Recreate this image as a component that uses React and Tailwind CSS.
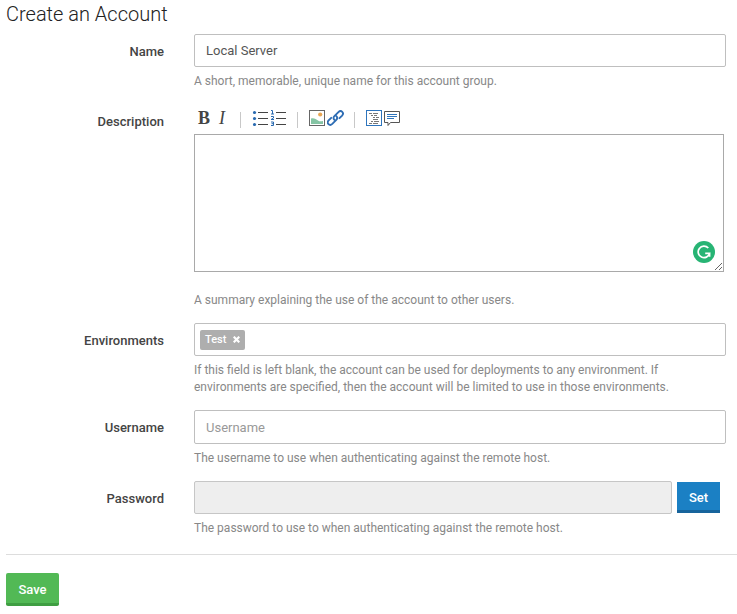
import React from "react";

const fieldClass =
  "block w-full rounded-[2px] border border-[#bfbfbf] bg-white px-[11px] text-[13px] text-[#555] outline-none placeholder:text-[#999]";

function FormRow({ id, label, help, children }) {
  return (
    <div className="flex gap-[30px]">
      <label
        htmlFor={id}
        className="w-[158px] shrink-0 pt-[9px] text-right text-[13px] leading-[18px] font-medium text-[#444]"
      >
        {label}
      </label>
      <div className="min-w-0 flex-1">
        {children}
        <p className="mt-[6px] text-[12px] leading-[17px] text-[#888]">{help}</p>
      </div>
    </div>
  );
}

function ToolButton({ title, children }) {
  return (
    <button type="button" aria-label={title} title={title} className="flex h-[18px] w-[18px] items-center justify-center">
      {children}
    </button>
  );
}

function Icon({ children }) {
  return (
    <svg width="18" height="18" viewBox="0 0 18 18" fill="none" aria-hidden="true">
      {children}
    </svg>
  );
}

function Separator() {
  return <span className="mt-1 mr-[11px] ml-[9px] h-4 w-px bg-[#c8c8c8]" />;
}

function Toolbar() {
  return (
    <div className="flex h-[30px] items-center pb-[2px] pl-px" role="toolbar" aria-label="Formatting">
      <ToolButton title="Bold">
        <span className="font-['Liberation_Serif',serif] text-[18px] leading-[18px] font-bold text-[#444]">B</span>
      </ToolButton>
      <ToolButton title="Italic">
        <span className="font-['Liberation_Serif',serif] text-[18px] leading-[18px] font-medium text-[#444] italic">I</span>
      </ToolButton>
      <Separator />
      <ToolButton title="Bulleted list">
        <Icon>
          <g fill="#2a6ab0">
            <circle cx="2.5" cy="3.5" r="1.6" />
            <circle cx="2.5" cy="9.5" r="1.6" />
            <circle cx="2.5" cy="15.5" r="1.6" />
          </g>
          <path d="M6 3.5h10M6 9.5h10M6 15.5h10" stroke="#444" />
        </Icon>
      </ToolButton>
      <ToolButton title="Numbered list">
        <Icon>
          <path
            d="M1 1.5h1.5V5M1 5h3M1 7.5h2.5V9L1 10.5h3M1 13h2.5v3.5H1M1.5 14.7h2"
            stroke="#2a6ab0"
          />
          <path d="M6 3.5h10M6 9.5h10M6 15.5h10" stroke="#444" />
        </Icon>
      </ToolButton>
      <Separator />
      <ToolButton title="Image">
        <Icon>
          <rect x=".5" y="1.5" width="15" height="15" stroke="#666" />
          <circle cx="11.2" cy="5.5" r="2.1" fill="#e9a653" />
          <path d="M2 9.5c3-.8 5 .5 7 2s3 .5 5 .5v3H2z" fill="#85c4a4" />
        </Icon>
      </ToolButton>
      <ToolButton title="Link">
        <Icon>
          <g stroke="#2e6db4" strokeWidth="1.9" strokeLinecap="round">
            <path d="M7.4 10.9c-1.2-1.2-1.2-2.6 0-3.8l4-4c2.8-2.6 6.2.8 3.7 3.5l-2.6 2.6" />
            <path d="M9.3 7.1c1.2 1.2 1.2 2.6 0 3.8l-4 4c-2.8 2.6-6.2-.8-3.7-3.5l2.6-2.6" />
          </g>
        </Icon>
      </ToolButton>
      <Separator />
      <ToolButton title="Code">
        <Icon>
          <rect x=".5" y="1.5" width="15" height="15" stroke="#2e75bd" />
          <path d="M3 4.5h3M7 4.5h5M5 6.5h2M8 6.5h3M7 8.5h2M10 8.5h3M7 10.5h5M5 12.5h2M8 12.5h5M3 14.5h3M7 14.5h5" stroke="#777" />
        </Icon>
      </ToolButton>
      <ToolButton title="Comment">
        <Icon>
          <path d="M.5 2.5h15v11H6.5L4 16.5v-3H.5z" stroke="#555" />
          <path d="M3 5.5h10M3 7.5h10M3 9.5h7" stroke="#2e75bd" strokeWidth="1.1" />
        </Icon>
      </ToolButton>
    </div>
  );
}

export default function App() {
  return (
    <main className="bg-white pl-[6px] font-['Roboto',sans-serif]">
      <form onSubmit={(event) => event.preventDefault()}>
        <h1 className="pt-px text-[20px] leading-[27px] font-light text-[#222]">Create an Account</h1>

        <div className="mt-[6px] flex flex-col gap-[14px] pr-[11px]">
          <FormRow id="name" label="Name" help="A short, memorable, unique name for this account group.">
            <input id="name" type="text" defaultValue="Local Server" className={`h-[33px] ${fieldClass}`} />
          </FormRow>

          <FormRow
            id="description"
            label="Description"
            help="A summary explaining the use of the account to other users."
          >
            <Toolbar />
            <div className="relative mr-[2px] mb-5">
              <textarea
                id="description"
                className="block h-[138px] w-full resize border border-[#a9a9a9] bg-white p-2 text-[13px] text-[#555] outline-none"
              />
              <svg
                className="pointer-events-none absolute right-[9px] bottom-[9px]"
                width="22"
                height="22"
                viewBox="0 0 22 22"
                fill="none"
                aria-hidden="true"
              >
                <circle cx="11" cy="11" r="11" fill="#27b474" />
                <path d="M15.3 7A5.8 5.8 0 1 0 16.6 12.3H12.2M16.6 12v3.8" stroke="#fff" strokeWidth="1.7" />
              </svg>
            </div>
          </FormRow>

          <FormRow
            id="environments"
            label="Environments"
            help="If this field is left blank, the account can be used for deployments to any environment. If environments are specified, then the account will be limited to use in those environments."
          >
            <div className="flex h-[33px] items-center rounded-[2px] border border-[#bfbfbf] bg-white px-[5px]">
              <span className="flex h-5 items-center gap-[7px] rounded-[2px] bg-[#aeaeae] px-[5px] text-[11px] leading-5 font-medium text-white">
                Test
                <button type="button" aria-label="Remove Test">
                  <svg width="7" height="7" viewBox="0 0 7 7" aria-hidden="true">
                    <path d="M.7.7l5.6 5.6M6.3.7L.7 6.3" stroke="#fff" strokeWidth="2.2" />
                  </svg>
                </button>
              </span>
              <input id="environments" type="text" className="h-full min-w-0 flex-1 outline-none" />
            </div>
          </FormRow>

          <FormRow
            id="username"
            label="Username"
            help="The username to use when authenticating against the remote host."
          >
            <input id="username" type="text" placeholder="Username" className={`h-[34px] ${fieldClass}`} />
          </FormRow>

          <FormRow
            id="password"
            label="Password"
            help="The password to use to when authenticating against the remote host."
          >
            <div className="flex items-center gap-[5px] pr-[6px]">
              <input
                id="password"
                type="password"
                disabled
                className="block h-[33px] min-w-0 flex-1 rounded-[2px] border border-[#c6c6c6] bg-[#eee] px-3"
              />
              <button
                type="button"
                className="h-[31px] w-[43px] border-b-[3px] border-[#17649c] bg-[#1b80c4] pt-[3px] text-[13px] font-medium text-white"
              >
                Set
              </button>
            </div>
          </FormRow>
        </div>

        <hr className="mt-[17px] border-[#ddd]" />
        <button
          type="submit"
          className="mt-[18px] h-[33px] w-[53px] rounded-[2px] border-b-[3px] border-[#3f9e42] bg-[#52b955] pt-[3px] text-[13px] font-medium text-white"
        >
          Save
        </button>
      </form>
    </main>
  );
}
